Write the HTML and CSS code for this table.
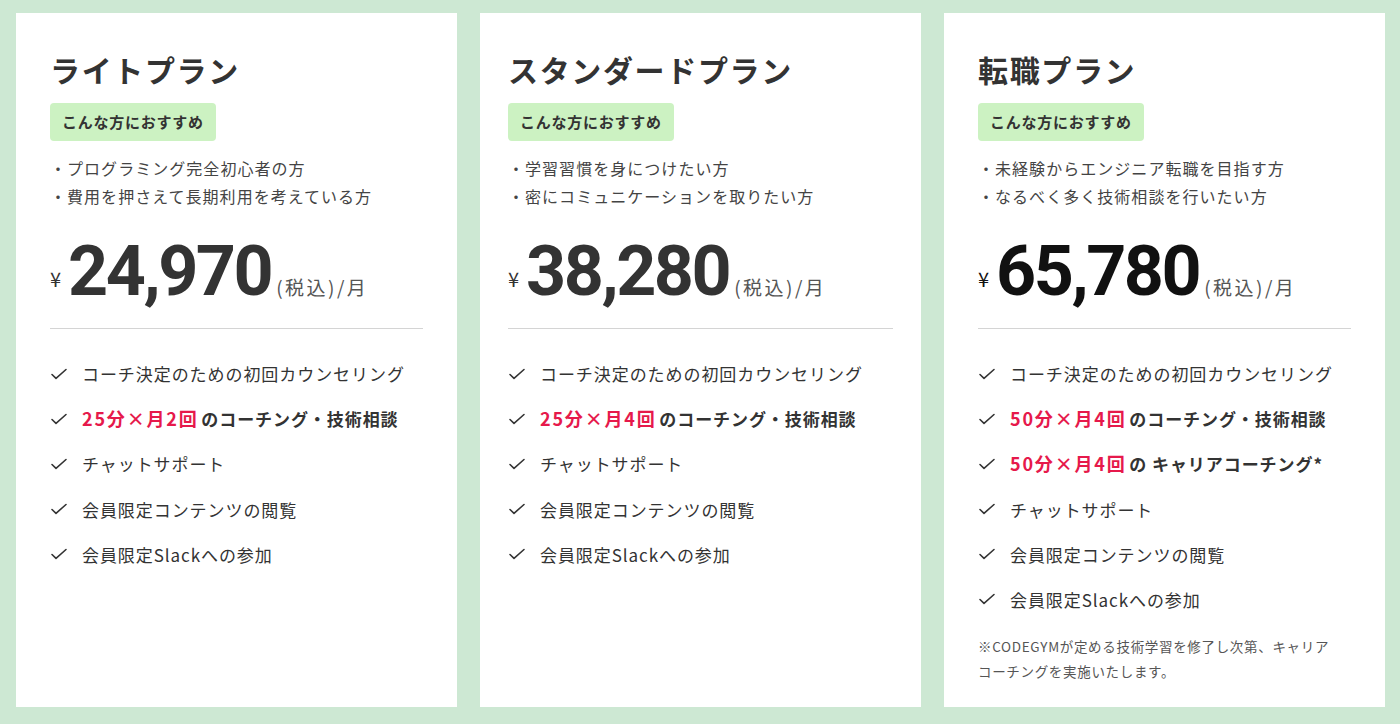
FILE: index.html
```html
<!DOCTYPE html>
<html lang="ja">
<head>
<meta charset="utf-8">
<title>料金プラン</title>
<link rel="stylesheet" href="styles.css">
</head>
<body>
<main class="plans">
  <section class="card">
    <h2 class="title">ライトプラン</h2>
    <span class="badge">こんな方におすすめ</span>
    <ul class="targets">
      <li>・プログラミング完全初心者の方</li>
      <li>・費用を押さえて長期利用を考えている方</li>
    </ul>
    <p class="price"><span class="yen">¥</span><span class="amount">24,970</span><span class="tax">(税込)/月</span></p>
    <div class="divider"></div>
    <ul class="features">
      <li><svg class="check" viewBox="0 0 18 12" width="18" height="12"><path d="M2 6.5 L6 10.3 L16 1.5"/></svg><span>コーチ決定のための初回カウンセリング</span></li>
      <li class="strong"><svg class="check" viewBox="0 0 18 12" width="18" height="12"><path d="M2 6.5 L6 10.3 L16 1.5"/></svg><span><em class="hl">25分×月2回</em> のコーチング・技術相談</span></li>
      <li><svg class="check" viewBox="0 0 18 12" width="18" height="12"><path d="M2 6.5 L6 10.3 L16 1.5"/></svg><span>チャットサポート</span></li>
      <li><svg class="check" viewBox="0 0 18 12" width="18" height="12"><path d="M2 6.5 L6 10.3 L16 1.5"/></svg><span>会員限定コンテンツの閲覧</span></li>
      <li><svg class="check" viewBox="0 0 18 12" width="18" height="12"><path d="M2 6.5 L6 10.3 L16 1.5"/></svg><span>会員限定Slackへの参加</span></li>
    </ul>
  </section>

  <section class="card card-mid">
    <h2 class="title">スタンダードプラン</h2>
    <span class="badge">こんな方におすすめ</span>
    <ul class="targets">
      <li>・学習習慣を身につけたい方</li>
      <li>・密にコミュニケーションを取りたい方</li>
    </ul>
    <p class="price"><span class="yen">¥</span><span class="amount">38,280</span><span class="tax">(税込)/月</span></p>
    <div class="divider"></div>
    <ul class="features">
      <li><svg class="check" viewBox="0 0 18 12" width="18" height="12"><path d="M2 6.5 L6 10.3 L16 1.5"/></svg><span>コーチ決定のための初回カウンセリング</span></li>
      <li class="strong"><svg class="check" viewBox="0 0 18 12" width="18" height="12"><path d="M2 6.5 L6 10.3 L16 1.5"/></svg><span><em class="hl">25分×月4回</em> のコーチング・技術相談</span></li>
      <li><svg class="check" viewBox="0 0 18 12" width="18" height="12"><path d="M2 6.5 L6 10.3 L16 1.5"/></svg><span>チャットサポート</span></li>
      <li><svg class="check" viewBox="0 0 18 12" width="18" height="12"><path d="M2 6.5 L6 10.3 L16 1.5"/></svg><span>会員限定コンテンツの閲覧</span></li>
      <li><svg class="check" viewBox="0 0 18 12" width="18" height="12"><path d="M2 6.5 L6 10.3 L16 1.5"/></svg><span>会員限定Slackへの参加</span></li>
    </ul>
  </section>

  <section class="card card-pro">
    <h2 class="title">転職プラン</h2>
    <span class="badge">こんな方におすすめ</span>
    <ul class="targets">
      <li>・未経験からエンジニア転職を目指す方</li>
      <li>・なるべく多く技術相談を行いたい方</li>
    </ul>
    <p class="price"><span class="yen">¥</span><span class="amount">65,780</span><span class="tax">(税込)/月</span></p>
    <div class="divider"></div>
    <ul class="features">
      <li><svg class="check" viewBox="0 0 18 12" width="18" height="12"><path d="M2 6.5 L6 10.3 L16 1.5"/></svg><span>コーチ決定のための初回カウンセリング</span></li>
      <li class="strong"><svg class="check" viewBox="0 0 18 12" width="18" height="12"><path d="M2 6.5 L6 10.3 L16 1.5"/></svg><span><em class="hl">50分×月4回</em> のコーチング・技術相談</span></li>
      <li class="strong"><svg class="check" viewBox="0 0 18 12" width="18" height="12"><path d="M2 6.5 L6 10.3 L16 1.5"/></svg><span><em class="hl">50分×月4回</em> の キャリアコーチング*</span></li>
      <li><svg class="check" viewBox="0 0 18 12" width="18" height="12"><path d="M2 6.5 L6 10.3 L16 1.5"/></svg><span>チャットサポート</span></li>
      <li><svg class="check" viewBox="0 0 18 12" width="18" height="12"><path d="M2 6.5 L6 10.3 L16 1.5"/></svg><span>会員限定コンテンツの閲覧</span></li>
      <li><svg class="check" viewBox="0 0 18 12" width="18" height="12"><path d="M2 6.5 L6 10.3 L16 1.5"/></svg><span>会員限定Slackへの参加</span></li>
    </ul>
    <p class="note">※CODEGYMが定める技術学習を修了し次第、キャリア<br>コーチングを実施いたします。</p>
  </section>
</main>
</body>
</html>
```

FILE: styles.css
```css
* {
  box-sizing: border-box;
}

html, body {
  margin: 0;
  padding: 0;
}

body {
  background: #cde8d3;
  font-family: "Noto Sans CJK JP", "Noto Sans", sans-serif;
  color: #333;
}

.plans {
  display: grid;
  grid-template-columns: repeat(3, 1fr);
  gap: 23px;
  height: 724px;
  padding: 13px 15px 17px 16px;
}

.card {
  background: #fff;
  padding: 36px 34px 23px;
  display: flex;
  flex-direction: column;
  align-items: flex-start;
}

.card-mid {
  padding-left: 28px;
  padding-right: 28px;
}

.title {
  margin: 0;
  font-size: 30px;
  line-height: 40px;
  font-weight: 700;
  letter-spacing: 0.055em;
  color: #333;
}

.badge {
  margin-top: 14px;
  background: #ccf2c2;
  border-radius: 4px;
  padding: 0 12px;
  font-size: 15px;
  line-height: 38px;
  font-weight: 700;
  letter-spacing: 0.05em;
  color: #333;
}

.targets {
  list-style: none;
  margin: 13px 0 0;
  padding: 0;
  font-size: 16px;
  line-height: 28px;
  letter-spacing: 0.065em;
  color: #444;
}

.price {
  margin: 26px 0 0;
  font-size: 0;
  line-height: 0;
  color: #333;
  white-space: nowrap;
}

.yen {
  font-size: 20px;
  line-height: 20px;
  vertical-align: 8px;
}

.amount {
  font-family: Roboto, "Liberation Sans", sans-serif;
  font-weight: 700;
  font-size: 70px;
  line-height: 70px;
  letter-spacing: -2.5px;
  margin-left: 7px;
  margin-right: 5px;
}

.tax {
  font-size: 19px;
  line-height: 20px;
  letter-spacing: 0.13em;
  color: #555;
}

.card-pro .price {
  color: #111;
}

.divider {
  align-self: stretch;
  height: 1px;
  background: #d4d4d4;
  margin-top: 22px;
}

.features {
  list-style: none;
  margin: 31px 0 0;
  padding: 0;
  display: flex;
  flex-direction: column;
  gap: 18.2px;
  font-size: 17px;
  line-height: 27px;
  letter-spacing: 0.055em;
  color: #333;
}

.features li {
  display: flex;
  align-items: center;
}

.features li.strong {
  font-weight: 700;
}

.check {
  flex: none;
  margin-right: 14px;
  fill: none;
  stroke: #333;
  stroke-width: 1.6;
  stroke-linecap: round;
  stroke-linejoin: round;
}

.hl {
  font-style: normal;
  font-size: 18px;
  letter-spacing: 0.1em;
  margin-right: -2px;
  color: #e6194b;
}

.note {
  margin: 21px 0 0;
  font-size: 13.5px;
  line-height: 25px;
  letter-spacing: 0.05em;
  color: #555;
}
```
